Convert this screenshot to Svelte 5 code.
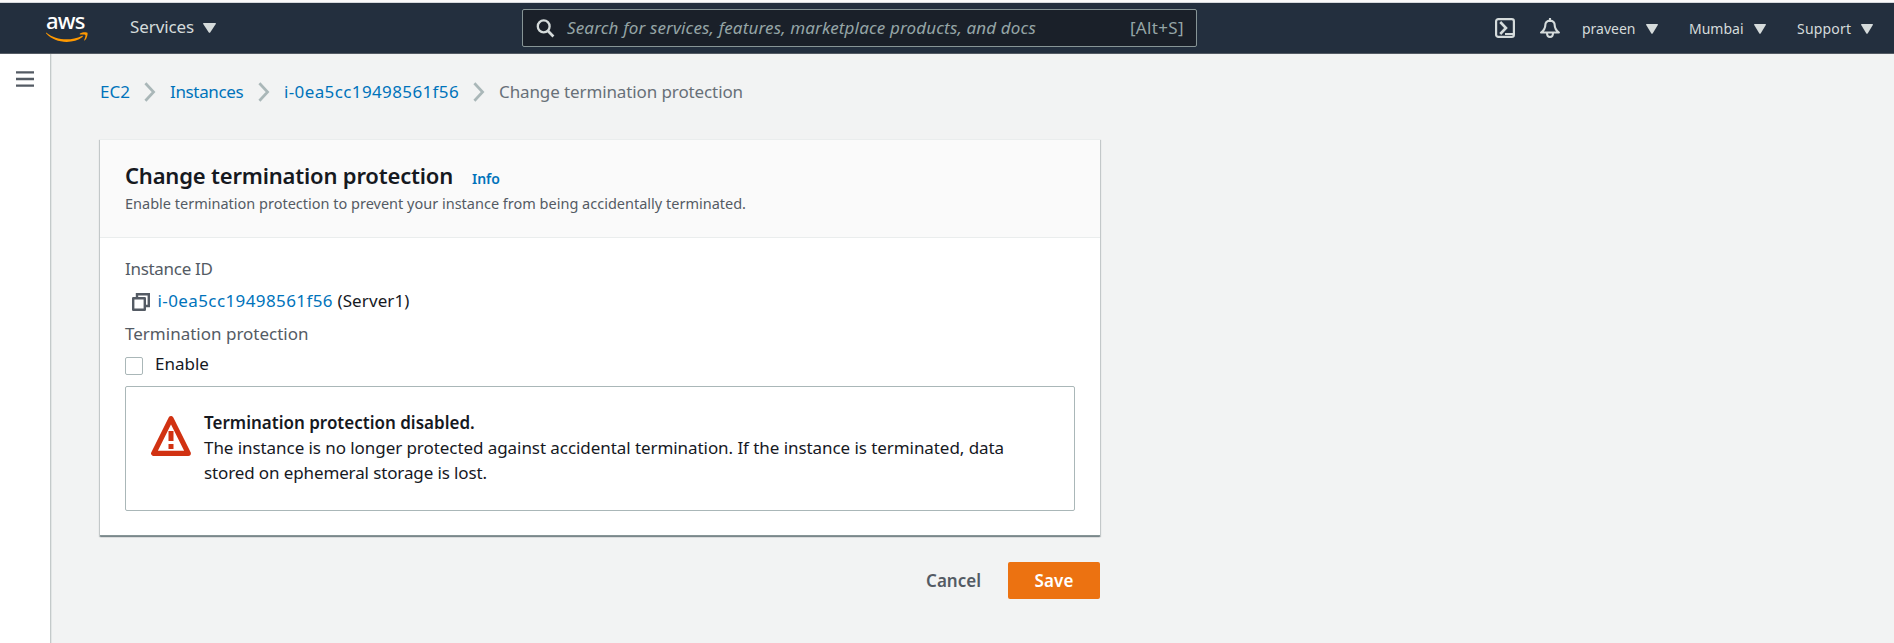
<script>
  const menus = [
    { label: 'praveen', cls: 'm1' },
    { label: 'Mumbai', cls: 'm2' },
    { label: 'Support', cls: 'm3' }
  ];
</script>

{#snippet caret(w, h)}
  <svg class="caret" width={w} height={h} viewBox="0 0 12 10" preserveAspectRatio="none"><path d="M.6 0h10.8q.8.2.4 1L6.8 9.3q-.8 1-1.6 0L.2 1Q-.2.2.6 0z" fill="#d5dbdb" /></svg>
{/snippet}

{#snippet chevron()}
  <svg class="chevron" width="12" height="20" viewBox="0 0 12 20"><path d="M1.400 1.300 9.600 10l-8.200 8.700" fill="none" stroke="#aab7b8" stroke-width="2.700" /></svg>
{/snippet}

<div class="page">
  <header>
    <div class="logo">
      <span>aws</span>
      <svg width="42" height="11" viewBox="0 0 42 11">
        <path d="M.4.7C6 5.2 13 7.3 20.500 7.300c5.200 0 10.500-1.200 15.300-3.400 1-.4 1.500.4.700 1.100C32.300 8.300 26.500 9.900 20.700 9.900 12.700 9.900 5.300 7 .2 1.500-.3.900 0 .3.400.7z" fill="#f90" />
        <path d="M34 1.400c2.300-1.500 6.800-1.400 7.400-.7.600.8-.2 5.500-2.500 7.600-.5.400-.9.200-.7-.3.600-1.400 1.600-4.300 1.200-5-.5-.7-3.300-.5-4.900-.5-.8-.1-1-.7-.5-1.100z" fill="#f90" />
      </svg>
    </div>
    <div class="services"><span>Services</span>{@render caret(13, 10)}</div>
    <div class="search">
      <svg width="20" height="19" viewBox="0 0 20 19"><ellipse cx="7.700" cy="7.400" rx="5.900" ry="6" fill="none" stroke="#d5dbdb" stroke-width="2.300" /><path d="m11.800 11.800 5.600 5.700" stroke="#d5dbdb" stroke-width="2.700" /></svg>
      <em>Search for services, features, marketplace products, and docs</em>
      <span>[Alt+S]</span>
    </div>
    <div class="right">
      <svg class="shell" width="20" height="20" viewBox="0 0 20 20" fill="none" stroke="#d5dbdb"><rect x="1.100" y="1.100" width="17.800" height="17.800" rx="2.200" stroke-width="2.200" /><path d="m5.200 4 5.800 6-5.800 6" stroke-width="2.600" /><path d="M10 16h8" stroke-width="2" /></svg>
      <svg class="bell" width="20" height="20" viewBox="0 0 20 20" fill="none" stroke="#d5dbdb" stroke-width="2.100" stroke-linejoin="round"><path d="M10 0v3" /><path d="M10 2.600c-3.200 0-4.700 2-4.700 4.600 0 3.500-1.300 5-4.200 7.300h17.800c-2.900-2.300-4.200-3.800-4.200-7.300 0-2.600-1.500-4.600-4.700-4.600z" /><path d="M7 15c0 5.200 6 5.200 6 0" /></svg>
      {#each menus as m}
        <div class="menu {m.cls}"><span>{m.label}</span>{@render caret(12, 10)}</div>
      {/each}
    </div>
  </header>

  <div class="body">
    <aside>
      <svg width="18" height="16" viewBox="0 0 18 16"><path d="M0 1.400h18M0 8h18M0 14.600h18" stroke="#545b64" stroke-width="2.400" /></svg>
    </aside>
    <main>
      <nav>
        <a class="c1" href="#ec2">EC2</a>{@render chevron()}
        <a class="c2" href="#instances">Instances</a>{@render chevron()}
        <a class="c3" href="#instance">i-0ea5cc19498561f56</a>{@render chevron()}
        <span>Change termination protection</span>
      </nav>

      <section class="card">
        <div class="head">
          <div class="title"><h1>Change termination protection</h1><a href="#info">Info</a></div>
          <p>Enable termination protection to prevent your instance from being accidentally terminated.</p>
        </div>
        <div class="content">
          <div class="label id-label">Instance ID</div>
          <div class="instance">
            <svg width="18" height="18" viewBox="0 0 18 18" fill="none" stroke="#545b64" stroke-width="2.400"><path d="M5 5V1.200h11.800V13H13" /><path d="M1.200 5.200h11.600v11.600H1.200z" stroke-linejoin="round" /></svg>
            <a href="#instance">i-0ea5cc19498561f56</a><span>(Server1)</span>
          </div>
          <div class="label tp">Termination protection</div>
          <label><input type="checkbox" />Enable</label>
          <div class="alert">
            <svg width="40" height="40" viewBox="0 0 40 40"><path d="M20 2.700 2.700 37.300h34.600z" fill="none" stroke="#d13212" stroke-width="5.200" stroke-linejoin="round" /><path d="M17.500 15h5v10h-5zM17.500 28h5v5h-5z" fill="#d13212" /></svg>
            <div>
              <strong>Termination protection disabled.</strong>
              <p>The instance is no longer protected against accidental termination. If the instance is terminated, data</p>
              <p class="l2">stored on ephemeral storage is lost.</p>
            </div>
          </div>
        </div>
      </section>

      <div class="actions">
        <button class="cancel">Cancel</button>
        <button class="save">Save</button>
      </div>
    </main>
  </div>
</div>

<style>
  :global(body) { margin: 0; background: #f2f3f3; }
  .page { height: 643px; display: flex; flex-direction: column; overflow: hidden; font: 17px/25px "Noto Sans", sans-serif; color: #16191f; white-space: nowrap; }
  svg { display: block; flex: none; }
  a { color: #0073bb; text-decoration: none; }
  p, h1 { margin: 0; }

  header { box-sizing: border-box; height: 54px; flex: none; background: #232f3e; border-top: 2px solid #fafafa; border-bottom: 1px solid #545b64; box-shadow: inset 0 1px #d5d8dc; display: flex; align-items: flex-start; color: #d5dbdb; }
  .logo { width: 42px; margin: 7px 0 0 46px; height: 40px; }
  .logo span { display: block; height: 23px; line-height: 22px; font-size: 22px; font-weight: 500; color: #fff; letter-spacing: -.8px; }
  .services { margin: 12px 0 0 42px; display: flex; align-items: center; gap: 9px; height: 25px; width: 86px; letter-spacing: -.1px; }
  .services .caret { margin-top: 2px; }
  .search { box-sizing: border-box; width: 675px; height: 38px; margin: 7px 0 0 306px; background: #1a2029; border: 1px solid #879596; border-radius: 2px; display: flex; align-items: center; padding: 0 12px 0 13px; color: #95a5a6; }
  .search em { margin-left: 11px; letter-spacing: .15px; padding-bottom: 2px; }
  .search span { margin-left: auto; letter-spacing: .35px; padding-bottom: 2px; }
  .right { display: flex; margin: 16px 0 0 298px; align-items: flex-start; }
  .bell { margin: 0 22px 0 25px; }
  .menu { display: flex; align-items: center; height: 20px; font-size: 14px; line-height: 20px; }
  .menu span { padding-top: 2px; }
  .menu .caret { margin-top: 1px; }
  .m1, .m2 { width: 107px; gap: 10px; }
  .m3 { gap: 10px; letter-spacing: .2px; margin-left: 1px; }

  .body { display: flex; flex: 1; }
  aside { box-sizing: border-box; width: 51px; background: #fff; border-right: 1px solid #c4caca; padding: 17px 0 0 16px; box-shadow: 1px 0 #e3e6e6; }
  main { width: 1000px; margin-left: 49px; }
  nav { display: flex; align-items: center; height: 25px; margin-top: 25px; color: #687078; }
  .chevron { margin: 0 14px; }
  .c1 { width: 30px; }
  .c2 { width: 74px; letter-spacing: -.35px; }
  .c3 { width: 175px; letter-spacing: .38px; }
  nav span { letter-spacing: -.11px; }

  .card { box-sizing: border-box; margin-top: 35px; height: 397px; background: #fff; box-shadow: 0 1px 1px rgba(0, 28, 36, .3), 1px 1px 1px rgba(0, 28, 36, .15), -1px 1px 1px rgba(0, 28, 36, .15); border-top: 1px solid #eaeded; border-bottom: 1px solid #879596; }
  .head { box-sizing: border-box; height: 98px; background: #fafafa; border-bottom: 1px solid #eaeded; padding: 19px 0 0 25px; color: #545b64; }
  .title { display: flex; align-items: baseline; gap: 19px; height: 33px; line-height: 33px; }
  h1 { color: #16191f; font-size: 22px; line-height: 33px; font-weight: 600; letter-spacing: -.19px; }
  .title a { font-size: 14px; font-weight: 600; }
  .head p { font-size: 14.500px; line-height: 22px; }
  .content { padding: 18px 25px 0; }
  .label { color: #545b64; height: 25px; }
  .id-label { letter-spacing: -.3px; }
  .instance { display: flex; height: 25px; margin: 7px 0 8px 7px; }
  .instance svg { margin: 5px 7.500px 0 0; }
  .instance a { letter-spacing: .4px; margin-right: 4.500px; }
  .instance span { letter-spacing: .1px; }
  label { display: flex; height: 25px; margin-top: 5px; align-items: flex-start; }
  input { appearance: none; box-sizing: border-box; width: 18px; height: 18px; margin: 6px 12px 0 0; border: 1px solid #aab7b8; border-radius: 2px; background: #fff; }
  .alert { box-sizing: border-box; height: 125px; margin-top: 10px; border: 1px solid #aab7b8; border-radius: 2px; display: flex; padding: 23px 25px; }
  .alert svg { margin: 6px 13px 0 0; }
  .alert strong { display: block; font-weight: 600; }
  .alert p { letter-spacing: -.065px; }
  .alert p.l2 { letter-spacing: -.12px; }

  .actions { display: flex; justify-content: flex-end; align-items: center; margin-top: 26px; gap: 27px; }
  button { font: 600 17px/25px "Noto Sans", sans-serif; border: 0; padding: 0 0 1px; background: none; color: #545b64; }
  .save { width: 92px; height: 37px; background: #ec7211; color: #fff; border-radius: 2px; letter-spacing: .1px; }
</style>
